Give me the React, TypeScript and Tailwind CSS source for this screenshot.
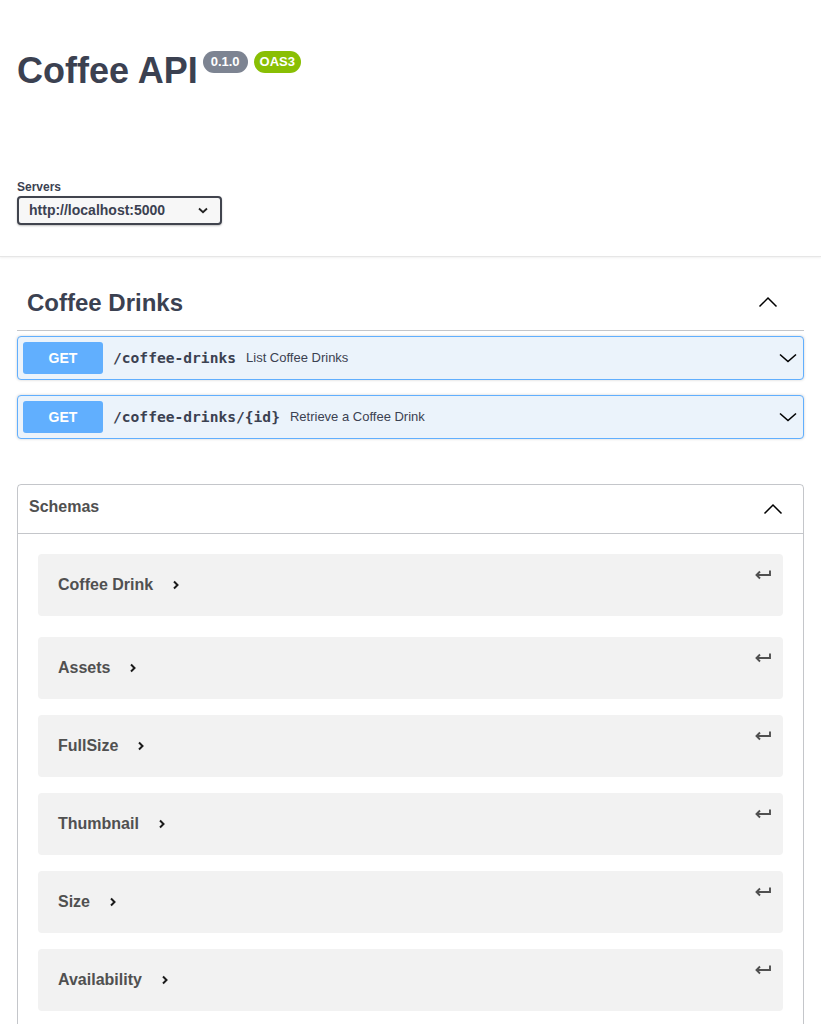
import React from "react";

const ChevronDown = ({ className = "" }: { className?: string }) => (
  <svg className={className} width="20" height="20" viewBox="0 0 20 20" fill="none">
    <path d="M2 6.5 L10 13.5 L18 6.5" stroke="#000" strokeWidth="1.6" />
  </svg>
);

const ChevronUp = ({ className = "" }: { className?: string }) => (
  <svg className={className} width="20" height="12" viewBox="0 0 20 12" fill="none">
    <path d="M1.5 10.5 L10 2 L18.5 10.5" stroke="#000" strokeWidth="1.5" />
  </svg>
);

const ChevronRightSmall = () => (
  <svg width="8" height="10" viewBox="0 0 8 10" fill="none">
    <path d="M2 1.5 L5.5 5 L2 8.5" stroke="#1a1a1a" strokeWidth="2" />
  </svg>
);

const ReturnIcon = () => (
  <svg width="18" height="13" viewBox="0 0 18 13" fill="none">
    <path d="M6 3.5 L2.5 7 L6 10.5" stroke="#505050" strokeWidth="1.9" />
    <path d="M2.5 7 H16 V2.5" stroke="#505050" strokeWidth="1.9" />
  </svg>
);

const ops = [
  { path: "/coffee-drinks", desc: "List Coffee Drinks" },
  { path: "/coffee-drinks/{id}", desc: "Retrieve a Coffee Drink" },
];

const models = ["Coffee Drink", "Assets", "FullSize", "Thumbnail", "Size", "Availability"];

export default function App() {
  return (
    <div className="min-h-screen bg-white font-['Liberation_Sans',Arial,sans-serif] text-[#3b4151]">
      {/* Info */}
      <div className="px-[17px] pt-[53px] pb-[31px] border-b border-[#e6e6e6] shadow-[0_1px_2px_0_rgba(0,0,0,0.06)]">
        <div className="flex items-start">
          <h1 className="text-[36px] leading-[36px] font-bold text-[#3b4151]">Coffee API</h1>
          <div className="flex gap-[6px] ml-[5px] -mt-[2px]">
            <span className="bg-[#7d8492] text-white text-[13px] leading-[16px] font-bold px-[8px] py-[3px] rounded-full">
              0.1.0
            </span>
            <span className="bg-[#89bf04] text-white text-[13px] leading-[16px] font-bold px-[6px] py-[3px] rounded-full">
              OAS3
            </span>
          </div>
        </div>
        <div className="mt-[92px] text-[12px] leading-[12px] font-bold text-[#3b4151]">Servers</div>
        <div className="mt-[3px] w-[205px] h-[29px] border-2 border-[#41444e] rounded-[4px] bg-[#f7f7f7] shadow-[0_1px_2px_0_rgba(0,0,0,0.25)] flex items-center justify-between pl-[10px] pr-[12px]">
          <span className="text-[14px] font-bold text-[#3b4151]">http://localhost:5000</span>
          <svg width="10" height="7" viewBox="0 0 10 7" fill="none">
            <path d="M1 1.5 L5 5.2 L9 1.5" stroke="#222" strokeWidth="1.8" />
          </svg>
        </div>
      </div>

      {/* Tag section */}
      <div className="px-[17px]">
        <div className="mt-[20px] h-[54px] border-b border-[rgba(59,65,81,0.3)] flex items-center justify-between pl-[10px] pr-[26px]">
          <h3 className="text-[24px] font-bold text-[#3b4151] -mt-[1px]">Coffee Drinks</h3>
          <ChevronUp className="-mt-[3px]" />
        </div>
        <div className="mt-[5px] flex flex-col gap-[15px]">
          {ops.map((op) => (
            <div
              key={op.path}
              className="h-[44px] border border-[#61affe] rounded-[4px] bg-[#ebf3fb] shadow-[0_0_3px_rgba(0,0,0,0.19)] flex items-center p-[5px] pr-[5px]"
            >
              <span className="w-[80px] h-[32px] bg-[#61affe] rounded-[3px] text-white text-[14px] font-bold flex items-center justify-center">
                GET
              </span>
              <span className="ml-[10px] font-['DejaVu_Sans_Mono',monospace] font-bold text-[14.6px] text-[#3b4151]">
                {op.path}
              </span>
              <span className="ml-[10px] text-[13px] text-[#3b4151]">{op.desc}</span>
              <ChevronDown className="ml-auto" />
            </div>
          ))}
        </div>

        {/* Schemas */}
        <div className="mt-[45px] border border-[rgba(59,65,81,0.3)] rounded-[4px]">
          <div className="h-[49px] border-b border-[rgba(59,65,81,0.3)] flex items-center justify-between pl-[11px] pr-[20px]">
            <h4 className="text-[16px] font-bold text-[#505050] -mt-[5px]">Schemas</h4>
            <ChevronUp />
          </div>
          <div className="px-[20px] pt-[20px] pb-[20px] flex flex-col">
            {models.map((m, i) => (
              <div
                key={m}
                className={`h-[62px] rounded-[4px] bg-[#f2f2f2] flex justify-between pl-[20px] pr-[11px] ${
                  i === 0 ? "" : i === 1 ? "mt-[21px]" : "mt-[16px]"
                }`}
              >
                <div className="flex items-center gap-[19px]">
                  <span className="text-[16px] font-bold text-[#505050]">{m}</span>
                  <ChevronRightSmall />
                </div>
                <div className="mt-[14px] self-start">
                  <ReturnIcon />
                </div>
              </div>
            ))}
          </div>
        </div>
      </div>
    </div>
  );
}
